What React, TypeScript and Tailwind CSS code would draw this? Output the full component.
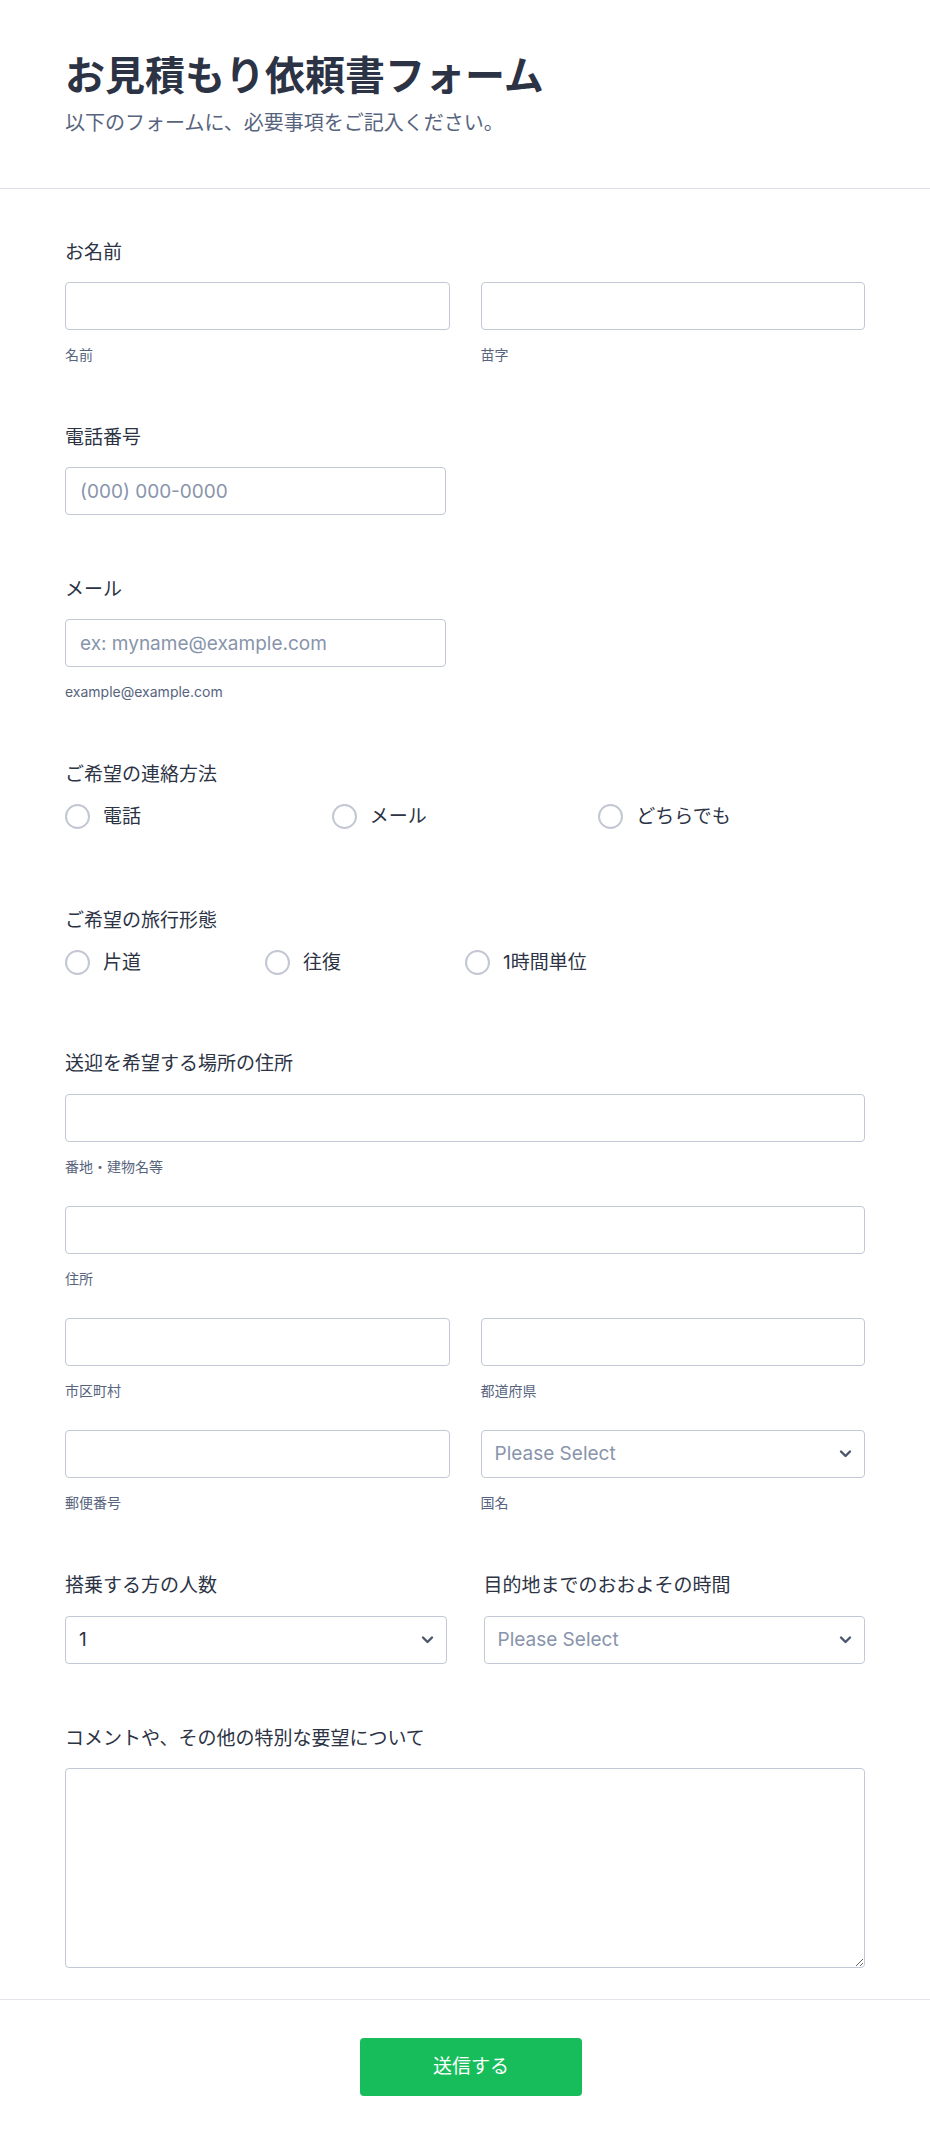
import { useState } from 'react';

const inputCls =
  'block w-full h-12 px-[14px] border border-[#c3c8d6] rounded-[4px] bg-white text-[19px] text-[#2c3345] placeholder:text-[#8894ab] outline-none focus:border-[#4c9bf5]';

function Label({ children }: { children: React.ReactNode }) {
  return <div className="text-[19px] leading-6 text-[#2c3345]">{children}</div>;
}

function SubLabel({ children }: { children: React.ReactNode }) {
  return <div className="mt-4 text-[14px] leading-[18px] text-[#57647e]">{children}</div>;
}

function Chevron() {
  return (
    <svg
      className="pointer-events-none absolute right-[13px] top-1/2 -translate-y-1/2"
      width="13"
      height="9"
      viewBox="0 0 13 9"
      fill="none"
    >
      <path d="M2 2l4.5 4.5L11 2" stroke="#4b566d" strokeWidth="2.4" strokeLinecap="round" strokeLinejoin="round" />
    </svg>
  );
}

function Select({ value, options }: { value: string; options: string[] }) {
  const [val, setVal] = useState(value);
  return (
    <div className="relative">
      <select
        value={val}
        onChange={(e) => setVal(e.target.value)}
        className={`block w-full h-12 pl-[13px] pr-10 border border-[#c3c8d6] rounded-[4px] bg-white text-[19px] appearance-none outline-none ${
          val === '' ? 'text-[#8894ab]' : 'text-[#2c3345]'
        }`}
      >
        <option value="">Please Select</option>
        {options.map((o) => (
          <option key={o} value={o}>
            {o}
          </option>
        ))}
      </select>
      <Chevron />
    </div>
  );
}

function Radio({ name, label }: { name: string; label: string }) {
  return (
    <label className="flex items-center gap-[13px] cursor-pointer">
      <input
        type="radio"
        name={name}
        className="w-[25px] h-[25px] shrink-0 appearance-none rounded-full border-2 border-[#c3c7d4] bg-white checked:border-[7px] checked:border-[#18bd5b]"
      />
      <span className="text-[19px] leading-6 text-[#2c3345]">{label}</span>
    </label>
  );
}

export default function App() {
  return (
    <div className="min-h-screen bg-white font-[Inter,'Noto_Sans_CJK_JP',sans-serif]">
      {/* header */}
      <div className="px-[65px] pt-[52px] pb-[50px] border-b border-[#dfe1e8]">
        <h1 className="text-[40px] leading-[48px] font-bold text-[#2c3345]">お見積もり依頼書フォーム</h1>
        <p className="mt-2 text-[20px] leading-[30px] text-[#57647e]">以下のフォームに、必要事項をご記入ください。</p>
      </div>

      <form className="px-[65px] pt-[52px]" onSubmit={(e) => e.preventDefault()}>
        {/* name */}
        <div>
          <Label>お名前</Label>
          <div className="mt-[17px] grid grid-cols-2 gap-[31px]">
            <div>
              <input className={inputCls} />
              <SubLabel>名前</SubLabel>
            </div>
            <div>
              <input className={inputCls} />
              <SubLabel>苗字</SubLabel>
            </div>
          </div>
        </div>

        {/* phone */}
        <div className="mt-[62px]">
          <Label>電話番号</Label>
          <div className="mt-[17px] w-[381px]">
            <input className={inputCls} placeholder="(000) 000-0000" />
          </div>
        </div>

        {/* email */}
        <div className="mt-[63px]">
          <Label>メール</Label>
          <div className="mt-[17px] w-[381px]">
            <input className={inputCls} placeholder="ex: myname@example.com" />
            <SubLabel>example@example.com</SubLabel>
          </div>
        </div>

        {/* contact method */}
        <div className="mt-[62px]">
          <Label>ご希望の連絡方法</Label>
          <div className="mt-[17px] grid grid-cols-3">
            <Radio name="contact" label="電話" />
            <Radio name="contact" label="メール" />
            <Radio name="contact" label="どちらでも" />
          </div>
        </div>

        {/* trip type */}
        <div className="mt-[80px]">
          <Label>ご希望の旅行形態</Label>
          <div className="mt-[17px] grid grid-cols-4">
            <Radio name="trip" label="片道" />
            <Radio name="trip" label="往復" />
            <Radio name="trip" label="1時間単位" />
          </div>
        </div>

        {/* address */}
        <div className="mt-[77px]">
          <Label>送迎を希望する場所の住所</Label>
          <div className="mt-[18px]">
            <input className={inputCls} />
            <SubLabel>番地・建物名等</SubLabel>
          </div>
          <div className="mt-[30px]">
            <input className={inputCls} />
            <SubLabel>住所</SubLabel>
          </div>
          <div className="mt-[30px] grid grid-cols-2 gap-[31px]">
            <div>
              <input className={inputCls} />
              <SubLabel>市区町村</SubLabel>
            </div>
            <div>
              <input className={inputCls} />
              <SubLabel>都道府県</SubLabel>
            </div>
          </div>
          <div className="mt-[30px] grid grid-cols-2 gap-[31px]">
            <div>
              <input className={inputCls} />
              <SubLabel>郵便番号</SubLabel>
            </div>
            <div>
              <Select value="" options={['日本', 'アメリカ合衆国', '韓国', '中国']} />
              <SubLabel>国名</SubLabel>
            </div>
          </div>
        </div>

        {/* passengers / duration */}
        <div className="mt-[62px] grid grid-cols-2 gap-[37px]">
          <div>
            <Label>搭乗する方の人数</Label>
            <div className="mt-[18px]">
              <Select value="1" options={['1', '2', '3', '4', '5', '6', '7', '8', '9', '10']} />
            </div>
          </div>
          <div>
            <Label>目的地までのおおよその時間</Label>
            <div className="mt-[18px]">
              <Select value="" options={['1時間未満', '1〜2時間', '2〜3時間', '3時間以上']} />
            </div>
          </div>
        </div>

        {/* comments */}
        <div className="mt-[63px]">
          <Label>コメントや、その他の特別な要望について</Label>
          <textarea className="mt-[17px] block w-full h-[200px] px-[14px] py-3 border border-[#c3c8d6] rounded-[4px] text-[19px] text-[#2c3345] outline-none" />
        </div>
      </form>

      {/* submit */}
      <div className="mt-[31px] border-t border-[#e3e5eb] pt-[38px] pb-[50px] pl-[12px] flex justify-center">
        <button
          type="submit"
          className="w-[222px] h-[58px] rounded-[4px] bg-[#18bd5b] text-white text-[19px] font-normal hover:bg-[#16a951]"
        >
          送信する
        </button>
      </div>
    </div>
  );
}
